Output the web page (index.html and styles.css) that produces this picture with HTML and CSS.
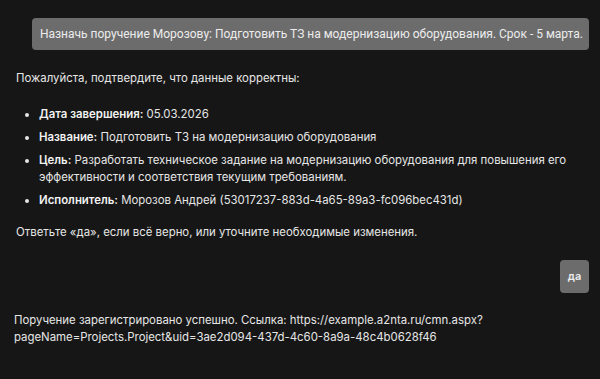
FILE: index.html
```html
<!DOCTYPE html>
<html lang="ru">
<head>
<meta charset="utf-8">
<link rel="stylesheet" href="styles.css">
</head>
<body>
<div class="chat">
  <div class="row user">
    <div class="bubble">Назначь поручение Морозову: Подготовить ТЗ на модернизацию оборудования. Срок - 5 марта.</div>
  </div>
  <div class="assistant first">
    <p class="p">Пожалуйста, подтвердите, что данные корректны:</p>
    <ul class="list">
      <li><b>Дата завершения:</b> 05.03.2026</li>
      <li><b>Название:</b> Подготовить ТЗ на модернизацию оборудования</li>
      <li><b>Цель:</b> Разработать техническое задание на модернизацию оборудования для повышения его эффективности и соответствия текущим требованиям.</li>
      <li><b>Исполнитель:</b> Морозов Андрей (53017237-883d-4a65-89a3-fc096bec431d)</li>
    </ul>
    <p class="p">Ответьте «да», если всё верно, или уточните необходимые изменения.</p>
  </div>
  <div class="row user">
    <div class="bubble small">да</div>
  </div>
  <div class="assistant last">
    <p class="p">Поручение зарегистрировано успешно. Ссылка: https://example.a2nta.ru/cmn.aspx?<br>pageName=Projects.Project&amp;uid=3ae2d094-437d-4c60-8a9a-48c4b0628f46</p>
  </div>
</div>
</body>
</html>
```
FILE: styles.css
```css
html, body {
  margin: 0;
  padding: 0;
  background: #161616;
}
body {
  width: 600px;
  height: 379px;
  overflow: hidden;
  font-family: Inter, "Noto Sans", sans-serif;
  color: #e6e6e6;
  font-size: 11.4px;
}
.chat {
  display: flex;
  flex-direction: column;
  padding: 18px 11px 0 16px;
}
.row {
  display: flex;
  justify-content: flex-end;
}
.bubble {
  background: #6c6c6c;
  border-radius: 4px;
  font-family: Roboto, sans-serif;
  font-size: 12px;
  line-height: 32px;
  padding: 0 6px 0 8px;
  color: #ececec;
}
.bubble.small {
  font-family: Inter, sans-serif;
  font-weight: 600;
  font-size: 11px;
  line-height: 33px;
  padding: 0 7px;
  width: 15px;
  text-align: center;
}
.assistant.first {
  margin-top: 20px;
  margin-bottom: 19px;
}
.assistant.last {
  margin-top: 19px;
  margin-left: -2px;
}
.p {
  margin: 0;
  line-height: 17px;
}
.list {
  margin: 19px 0 15px 0;
  padding-left: 23px;
}
.list li {
  line-height: 17px;
  margin-bottom: 6px;
}
.list li:last-child { margin-bottom: 0; }
.list b { font-weight: 600; color: #f2f2f2; }
```
